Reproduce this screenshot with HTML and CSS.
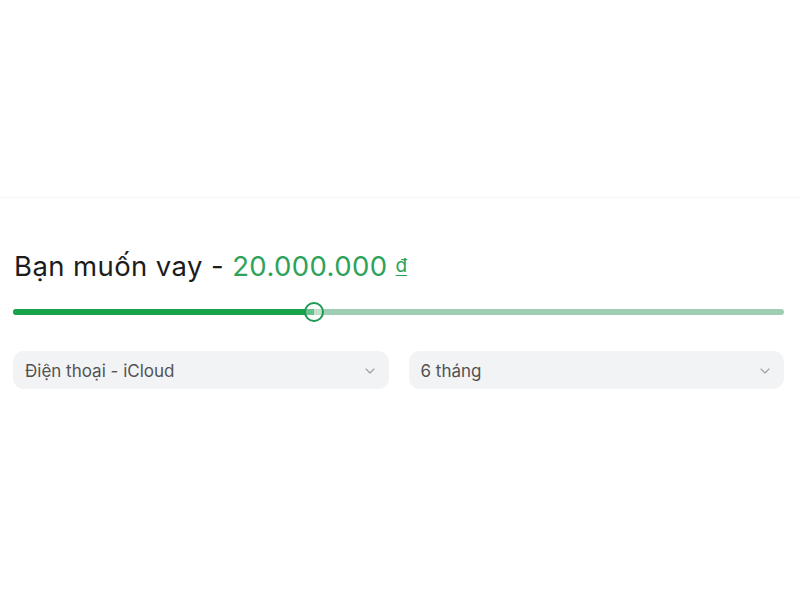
FILE: index.html
```html
<!DOCTYPE html>
<html lang="vi">
<head>
<meta charset="utf-8">
<link rel="stylesheet" href="styles.css">
</head>
<body>
<div class="top"></div>
<section class="calc">
  <h2 class="title">Bạn muốn vay - <span class="amount">20.000.000 <span class="cur">đ</span></span></h2>
  <div class="slider">
    <div class="track">
      <div class="fill" style="width: 39%"></div>
      <div class="thumb" style="left: 39%"></div>
    </div>
  </div>
  <div class="selects">
    <div class="select"><span>Điện thoại - iCloud</span>
      <svg class="chev" viewBox="0 0 10 6" width="10" height="6"><path d="M1 1l4 4 4-4" fill="none" stroke="#9a9ea4" stroke-width="1.1" stroke-linecap="round" stroke-linejoin="round"/></svg>
    </div>
    <div class="select"><span>6 tháng</span>
      <svg class="chev" viewBox="0 0 10 6" width="10" height="6"><path d="M1 1l4 4 4-4" fill="none" stroke="#9a9ea4" stroke-width="1.1" stroke-linecap="round" stroke-linejoin="round"/></svg>
    </div>
  </div>
</section>
</body>
</html>
```
FILE: styles.css
```css
html, body { margin: 0; padding: 0; background: #fff; }
body { font-family: "Inter", "Lato", sans-serif; width: 800px; height: 600px; overflow: hidden; }
.top { height: 197px; border-bottom: 1px solid #f6f6f6; }
.calc { padding: 48px 16px 0 13px; }
.title { margin: 0 0 0 1px; font-weight: 400; font-size: 27.5px; line-height: 40px; color: #1c1c1c; letter-spacing: 0.4px; }
.amount { color: #2ea25a; }
.cur { font-size: 19px; letter-spacing: 0; text-decoration: underline; text-underline-offset: 3px; vertical-align: 4px; }
.slider { margin-top: 23px; height: 6px; }
.track { position: relative; height: 6px; border-radius: 3px; background: #a0ceb5; }
.fill { height: 6px; border-radius: 3px 0 0 3px; background: #16a34a; }
.thumb { position: absolute; top: 50%; width: 16px; height: 16px; margin: -10px 0 0 -10px; border: 2px solid #1f9a52; border-radius: 50%; background: rgba(255,255,255,0.35); }
.selects { display: grid; grid-template-columns: 1fr 1fr; gap: 20px; margin-top: 36px; }
.select { height: 38px; background: #f2f3f5; border-radius: 11px; display: flex; align-items: center; justify-content: space-between; padding: 2px 14px 0 12px; box-sizing: border-box; font-size: 17px; color: #525252; }
.chev { display: block; }
```
